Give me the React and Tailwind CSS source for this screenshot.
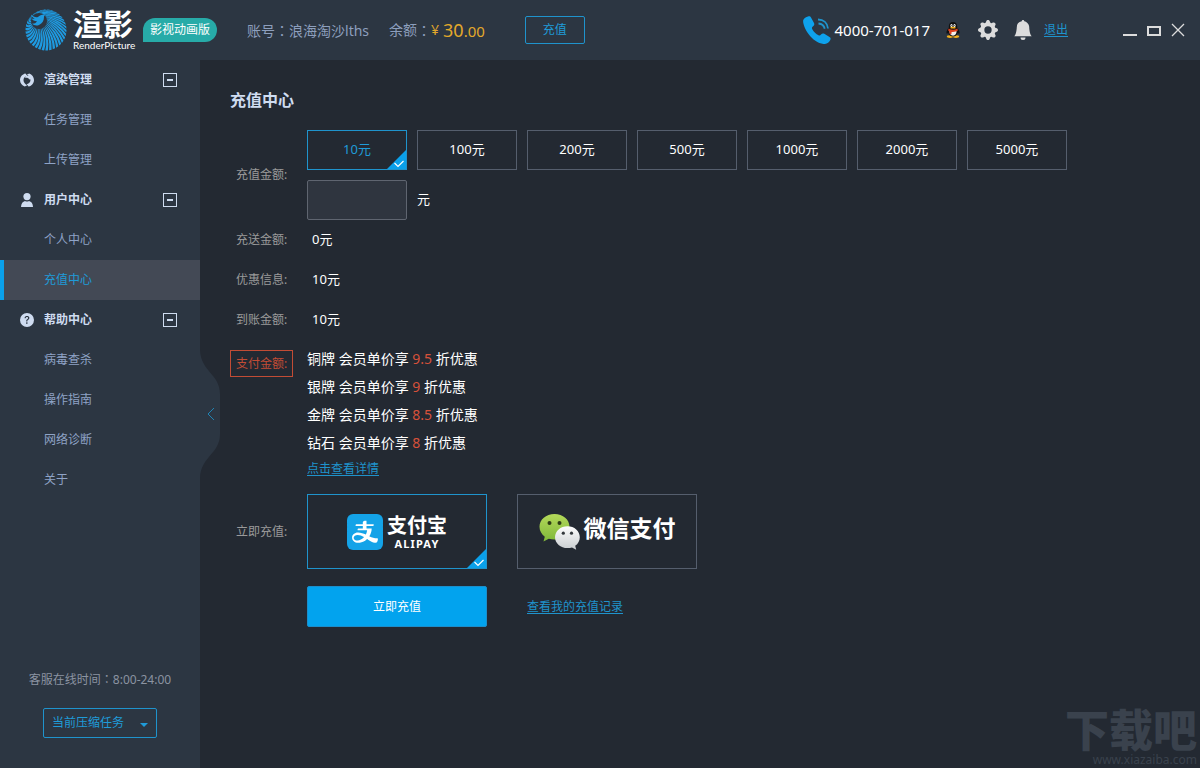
import { useState } from "react"
import { BsGearFill, BsBellFill, BsQuestionCircleFill } from "react-icons/bs"
import { AiFillAlipaySquare } from "react-icons/ai"

// Opciones de recarga
const amounts = ["10", "100", "200", "500", "1000", "2000", "5000"]

const levels = [
  { name: "铜牌", rate: "9.5" },
  { name: "银牌", rate: "9" },
  { name: "金牌", rate: "8.5" },
  { name: "钻石", rate: "8" },
]

const menu = [
  { title: "渲染管理", icon: SwirlIcon, items: ["任务管理", "上传管理"] },
  { title: "用户中心", icon: PersonIcon, items: ["个人中心", "充值中心"] },
  { title: "帮助中心", icon: HelpIcon, items: ["病毒查杀", "操作指南", "网络诊断", "关于"] },
]

function SwirlIcon() {
  return (
    <svg viewBox="0 0 14 14" className="w-[14px] h-[14px]" fill="#cfdcf0">
      <path d="M5.400.4C2.300 1.100 0 3.800 0 7c0 3.100 2 5.700 4.800 6.600l2.400-1.300C4.800 11 3.600 9.300 3.500 7.200 3.500 5.200 4.600 3.200 7.300 2.700z" />
      <path d="M8.600 13.600C11.700 12.900 14 10.200 14 7c0-3.100-2-5.700-4.800-6.600L6.800 1.700c2.400 1.300 3.600 3 3.700 5.100 0 2-1.100 4-3.800 4.500z" />
      <path d="M5.600 3.200c2.600-1 5.200.2 6 3L9.500 6.600C8.600 5 7.300 4.400 5 4.700z" />
    </svg>
  )
}

function PersonIcon() {
  return (
    <svg viewBox="0 0 14 14" className="w-[14px] h-[14px]" fill="#cfdcf0">
      <circle cx="7" cy="3.600" r="3.600" />
      <path d="M1 14c0-3.400 2-5.600 4-6 1.300.7 2.700.7 4 0 2.200.4 4 2.600 4 6z" />
    </svg>
  )
}

function HelpIcon() {
  return <BsQuestionCircleFill className="w-[14px] h-[14px] text-[#cfdcf0]" />
}

// Logo circular: aspas curvas que salen del ave
function Logo() {
  const blades = []
  const count = 34
  const point = (angle, r, cx, cy) => `${(cx + Math.cos(angle) * r).toFixed(2)} ${(cy + Math.sin(angle) * r).toFixed(2)}`
  for (let i = 0; i < count; i++) {
    const a = (i / count) * Math.PI * 2
    const b = a + 0.125
    blades.push(
      `M${point(a - 0.6, 6, 14, 12)} Q${point(a - 0.42, 15, 18, 17)} ${point(a, 20.5, 21, 21)} L${point(b, 20.5, 21, 21)} Q${point(b - 0.38, 15, 18, 17)} ${point(a - 0.54, 6, 14, 12)}Z`
    )
  }
  return (
    <svg viewBox="0 0 42 42" className="w-[42px] h-[42px] shrink-0">
      <path d={blades.join(" ")} fill="#1e9ae0" />
      <circle cx="14" cy="12" r="8" fill="#2c3642" />
      <path
        d="M6 5.500c2.500 2.500 4.500 3 7 2.500 2-1.800 4.500-3 7.500-2.200-1 .5-1.500 1.200-1.500 2.200 0 3.500-1.500 6.500-5 8-2.500 1-5 .5-7-1.200 2.500 0 4.200-.8 5-2.500-2.500-.3-4.500-1-5.700-3 1.500.6 2.500.6 3.500.4C8 9 6.500 7.500 6 5.500z"
        fill="#1e9ae0"
      />
    </svg>
  )
}

function PhoneIcon() {
  return (
    <svg viewBox="0 0 28 28" className="w-7 h-7" fill="none">
      <path
        d="M5 .5C6.500 0 7.500.5 8 1.500L11 7c.7 1.500 0 2.500-1.200 3.500-1 .8-1.100 1.500-.5 2.700 1.500 2.800 3.700 4.800 6.200 6.100 1.100.5 1.800.2 2.500-.7 1-1.200 2-1.600 3.300-.8l5.200 3.200c1.100.8 1.500 1.800.8 3-1.300 2.800-3.800 4.300-6.800 4C15 27.300 9.500 23.500 5.500 18 1.500 12.500-.5 6.500.3 4 1 2 3 1 5 .5z"
        fill="#0ea2ec"
      />
      <path d="M15 3.500c5.500 0 9.500 3.500 10 9M15.500 7.500c3.500.3 5.500 2 6.200 5.200" stroke="#1f93cc" strokeWidth="1.800" />
    </svg>
  )
}

function QQIcon() {
  return (
    <svg viewBox="0 0 14 16" className="w-[14px] h-[16px]">
      <ellipse cx="4" cy="14.600" rx="3.200" ry="1.300" fill="#f4b01c" />
      <ellipse cx="10" cy="14.600" rx="3.200" ry="1.300" fill="#f4b01c" />
      <path d="M7 0C4.300 0 2.800 2 2.800 4.500v1.300C1.300 7.500.2 9.600.5 11.200c.2.800 1 .4 1.700-.5.600 2.400 2.500 3.800 4.800 3.800s4.200-1.400 4.800-3.800c.7.900 1.500 1.300 1.700.5.300-1.600-.8-3.700-2.300-5.400V4.500C11.200 2 9.700 0 7 0z" fill="#111" />
      <path d="M3.400 8.500c0 3.200 1.200 5.200 3.600 5.200s3.600-2 3.600-5.200z" fill="#f4efe9" />
      <path d="M2.600 6.500c2.600 1.600 6.200 1.600 8.800 0l.4 1.900c-1.500 1-3 1.400-4.800 1.500H5.600l-.2 2.300-1.900-.4.100-2.400-1.400-1z" fill="#e2401f" />
      <ellipse cx="5.500" cy="3.400" rx="1.100" ry="1.500" fill="#fff" />
      <ellipse cx="8.500" cy="3.400" rx="1.100" ry="1.500" fill="#fff" />
      <circle cx="5.800" cy="3.600" r=".5" fill="#111" />
      <circle cx="8.200" cy="3.600" r=".5" fill="#111" />
      <ellipse cx="7" cy="5.700" rx="2.800" ry=".9" fill="#f4b01c" />
    </svg>
  )
}

function WechatIcon() {
  return (
    <svg viewBox="0 0 41 36" className="w-[41px] h-[36px]">
      <defs>
        <linearGradient id="green" x1="0" y1="0" x2="0" y2="1">
          <stop offset="0" stopColor="#b4d95a" />
          <stop offset="1" stopColor="#7fb83a" />
        </linearGradient>
        <linearGradient id="gray" x1="0" y1="0" x2="0" y2="1">
          <stop offset="0" stopColor="#fdfdfd" />
          <stop offset="1" stopColor="#c9cdd0" />
        </linearGradient>
      </defs>
      <path d="M15.500 0C7 0 .5 5.600.5 12.800c0 4.100 2.100 7.500 5.300 9.900L4.500 27.500l5.300-2.800c1.800.5 3.700.8 5.700.8C24 25.500 30.500 20 30.500 12.800S24 0 15.500 0z" fill="url(#green)" />
      <path d="M28.500 12.300c-7 0-12.500 4.900-12.500 10.900s5.500 10.900 12.500 10.900c1.600 0 3.100-.2 4.500-.7l4.200 2.300-1-3.900c2.900-2 4.600-5.100 4.600-8.600 0-6-5.400-10.900-12.300-10.900z" fill="url(#gray)" />
      <circle cx="10.500" cy="9" r="2" fill="#2d3b16" />
      <circle cx="20.500" cy="9" r="2" fill="#2d3b16" />
      <circle cx="24.300" cy="19.200" r="1.600" fill="#33383c" />
      <circle cx="32.500" cy="19.200" r="1.600" fill="#33383c" />
    </svg>
  )
}

// Esquina azul con el check
function CheckCorner() {
  return (
    <svg viewBox="0 0 19 19" className="absolute right-0 bottom-0 w-[19px] h-[19px]">
      <path d="M19 0v19H0z" fill="#0aa0ea" />
      <path d="M7.500 13l3.500 3.500 5.500-5.500" fill="none" stroke="#fff" strokeWidth="1.200" />
    </svg>
  )
}

// Dos puntos centrados en su casilla
function Colon() {
  return <span className="font-['Noto_Sans_CJK_TC',sans-serif]">：</span>
}

function Header() {
  return (
    <header className="flex items-center h-[60px] bg-[#2c3642] pl-[25px] pr-[15px]">
      <Logo />
      <div className="ml-[6px] w-[62px] text-white">
        <p className="text-[30px] leading-[30px] font-bold">渲影</p>
        <p className="text-[10px] leading-[13px] font-['Lato','Noto_Sans',sans-serif]">RenderPicture</p>
      </div>
      <span className="ml-2 h-6 px-[7px] rounded-xl rounded-bl-none bg-[#27aba8] text-white text-[12px] leading-6">影视动画版</span>

      <p className="ml-[30px] text-[14px] leading-5 text-[#8d9fbd]">账号<Colon />浪海淘沙lths</p>
      <p className="ml-5 text-[14px] leading-5 text-[#8d9fbd] flex items-center">
        余额<Colon />
        <span className="text-[#e3a92b] text-[14px]">¥</span>
        <span className="text-[#e3a92b] text-[18px] ml-1">30<span className="text-[15px]">.00</span></span>
      </p>
      <button type="button" className="ml-10 w-[60px] h-7 rounded-[2px] border border-[#1f93cc] text-[#1f9bd8] text-[12px]">充值</button>

      <div className="ml-auto flex items-center">
        <PhoneIcon />
        <span className="ml-1 text-[15px] text-white">4000-701-017</span>
        <button type="button" aria-label="QQ" className="ml-4"><QQIcon /></button>
        <button type="button" aria-label="设置" className="ml-[18px]"><BsGearFill className="w-5 h-5 text-[#dcdcdc]" /></button>
        <button type="button" aria-label="消息" className="ml-[15px]"><BsBellFill className="w-5 h-5 text-[#dcdcdc]" /></button>
        <a href="#" className="ml-[11px] text-[12px] text-[#1f93cc] underline underline-offset-2">退出</a>
        <div className="ml-[55px] flex items-center gap-[10px]">
          <button type="button" aria-label="最小化">
            <svg viewBox="0 0 14 14" className="w-[14px] h-[14px]"><path d="M0 12h14" stroke="#dcdcdc" strokeWidth="2" /></svg>
          </button>
          <button type="button" aria-label="最大化">
            <svg viewBox="0 0 14 14" className="w-[14px] h-[14px]" fill="none"><path d="M1 4h12v8H1z" stroke="#dcdcdc" strokeWidth="2" /></svg>
          </button>
          <button type="button" aria-label="关闭">
            <svg viewBox="0 0 14 14" className="w-[14px] h-[14px]"><path d="M1 1l12 12M13 1L1 13" stroke="#dcdcdc" strokeWidth="1.300" /></svg>
          </button>
        </div>
      </div>
    </header>
  )
}

function Sidebar() {
  return (
    <aside className="relative w-[200px] shrink-0 flex flex-col bg-[#2c3642]">
      <nav>
        {menu.map(({ title, icon: Icon, items }) => (
          <div key={title}>
            <button type="button" className="w-full h-10 pl-5 pr-[23px] flex items-center text-[12px] font-bold text-[#cfdcf0]">
              <Icon />
              <span className="ml-[10px]">{title}</span>
              <span className="ml-auto w-[14px] h-[14px] border border-[#cfdcf0] flex items-center justify-center">
                <span className="w-[6px] h-[2px] bg-[#cfdcf0]" />
              </span>
            </button>
            {items.map((item) => (
              <a
                key={item}
                href="#"
                className={
                  item === "充值中心"
                    ? "flex items-center h-10 pl-10 text-[12px] border-l-4 border-[#0aa0ea] bg-[#434955] text-[#1f9bd8]"
                    : "flex items-center h-10 pl-10 text-[12px] border-l-4 border-transparent text-[#8fa3c6]"
                }
              >
                {item}
              </a>
            ))}
          </div>
        ))}
      </nav>

      <div className="mt-auto pb-[30px] flex flex-col items-center">
        <p className="text-[12px] leading-5 text-[#8b93a1]">客服在线时间<Colon />8:00-24:00</p>
        <div className="relative mt-[18px]">
          <select aria-label="当前压缩任务" className="appearance-none w-[114px] h-[30px] pl-2 rounded-[2px] border border-[#1f93cc] bg-transparent text-[12px] text-[#1f9bd8]">
            <option>当前压缩任务</option>
          </select>
          <svg viewBox="0 0 8 4" className="absolute right-[9px] top-[15px] w-2 h-1 pointer-events-none"><path d="M0 0h8L4 4z" fill="#1f9bd8" /></svg>
        </div>
      </div>

      {/* Pestaña para ocultar el menú */}
      <button type="button" aria-label="收起" className="absolute left-full top-[290px]">
        <svg viewBox="0 0 20 128" className="w-5 h-32" fill="none">
          <path d="M0 0c1 22 20 24 20 44v40c0 20-19 22-20 44z" fill="#2c3642" />
          <path d="M14 58l-6 6 6 6" stroke="#1f84b5" />
        </svg>
      </button>
    </aside>
  )
}

export default function App() {
  const [amount, setAmount] = useState("10")
  const [custom, setCustom] = useState("")
  const [payment, setPayment] = useState("alipay")

  const payClass = (value) =>
    payment === value
      ? "relative w-[180px] h-[75px] flex items-center justify-center border border-[#1f93cc] cursor-pointer"
      : "relative w-[180px] h-[75px] flex items-center justify-center border border-[#555e6d] cursor-pointer"

  return (
    <div className="min-h-screen flex flex-col bg-[#232932] font-['Noto_Sans','Noto_Sans_CJK_SC',sans-serif]">
      <Header />
      <div className="flex flex-1">
        <Sidebar />

        <main className="relative flex-1 pl-[30px] pt-[30px]">
          <h1 className="text-[16px] leading-5 font-bold text-[#cfdcf0]">充值中心</h1>

          <form className="mt-5 text-[12px] text-[#9a9a9a]" onSubmit={(e) => e.preventDefault()}>
            {/* Monto */}
            <div className="flex items-center">
              <label htmlFor="custom" className="w-[77px] pl-[6px]">充值金额:</label>
              <div className="flex flex-col gap-[10px]">
                <div className="flex flex-wrap gap-[10px]">
                  {amounts.map((value) => (
                    <label
                      key={value}
                      className={
                        amount === value
                          ? "relative w-[100px] h-10 flex items-center justify-center border border-[#1f93cc] text-[13px] text-[#1f9bd8] cursor-pointer"
                          : "relative w-[100px] h-10 flex items-center justify-center border border-[#555e6d] text-[13px] text-white cursor-pointer"
                      }
                    >
                      <input
                        type="radio"
                        name="amount"
                        value={value}
                        checked={amount === value}
                        onChange={() => setAmount(value)}
                        className="sr-only"
                      />
                      {value}元
                      {amount === value && <CheckCorner />}
                    </label>
                  ))}
                </div>
                <div className="flex items-center gap-[10px] text-[13px] text-white">
                  <input
                    id="custom"
                    type="text"
                    value={custom}
                    onChange={(e) => setCustom(e.target.value)}
                    className="w-[100px] h-10 px-2 rounded-[2px] border border-[#5f6570] bg-[#2f353f]"
                  />
                  元
                </div>
              </div>
            </div>

            {/* Resumen */}
            <dl>
              <div className="flex items-center h-10">
                <dt className="w-[82px] pl-[6px]">充送金额:</dt>
                <dd className="text-[13px] text-white">0元</dd>
              </div>
              <div className="flex items-center h-10">
                <dt className="w-[82px] pl-[6px]">优惠信息:</dt>
                <dd className="text-[13px] text-white">{amount}元</dd>
              </div>
              <div className="flex items-center h-10">
                <dt className="w-[82px] pl-[6px]">到账金额:</dt>
                <dd className="text-[13px] text-white">{amount}元</dd>
              </div>
            </dl>

            {/* Descuentos por nivel */}
            <div className="flex items-start pt-[5px]">
              <div className="w-[77px] pt-[5px]">
                <span className="inline-block h-[27px] px-[5px] border border-[#c24c35] leading-[25px] text-[#c24c35]">支付金额:</span>
              </div>
              <div>
                <ul className="text-[14px] leading-7 text-white">
                  {levels.map((level) => (
                    <li key={level.name}>
                      {level.name} 会员单价享 <span className="text-[#d6513a]">{level.rate}</span> 折优惠
                    </li>
                  ))}
                </ul>
                <a href="#" className="block leading-6 text-[#1f93cc] underline underline-offset-2">点击查看详情</a>
              </div>
            </div>

            {/* Forma de pago */}
            <div className="mt-[13px] flex items-center">
              <span className="w-[77px] pl-[6px]">立即充值:</span>
              <div className="flex gap-[30px]">
                <label className={payClass("alipay")}>
                  <input type="radio" name="payment" checked={payment === "alipay"} onChange={() => setPayment("alipay")} className="sr-only" />
                  <span className="relative w-9 h-9 rounded-md flex items-center justify-center overflow-hidden">
                    <span className="absolute inset-[2px] bg-white" />
                    <AiFillAlipaySquare className="relative shrink-0 w-[46px] h-[46px] text-[#14a3e8]" />
                  </span>
                  <span className="ml-1 text-white font-bold">
                    <span className="block text-[20px] leading-6">支付宝</span>
                    <span className="block text-center text-[11px] leading-3 tracking-widest">ALIPAY</span>
                  </span>
                  {payment === "alipay" && <CheckCorner />}
                </label>
                <label className={payClass("wechat")}>
                  <input type="radio" name="payment" checked={payment === "wechat"} onChange={() => setPayment("wechat")} className="sr-only" />
                  <WechatIcon />
                  <span className="ml-1 pb-2 text-[23px] leading-8 font-bold text-white">微信支付</span>
                  {payment === "wechat" && <CheckCorner />}
                </label>
              </div>
            </div>

            <div className="mt-[17px] pl-[77px] flex items-center gap-10">
              <button type="submit" className="w-[180px] h-[41px] rounded-[2px] border border-[#1b8ecb] bg-[#02a3ee] text-white">立即充值</button>
              <a href="#" className="text-[#1f93cc] underline underline-offset-2">查看我的充值记录</a>
            </div>
          </form>

          {/* Marca de agua */}
          <div className="absolute right-[3px] bottom-0 text-right text-[#3a424d]">
            <p className="text-[44px] leading-[44px] font-black">下载吧</p>
            <p className="text-[12px] leading-4">www.xiazaiba.com</p>
          </div>
        </main>
      </div>
    </div>
  )
}
